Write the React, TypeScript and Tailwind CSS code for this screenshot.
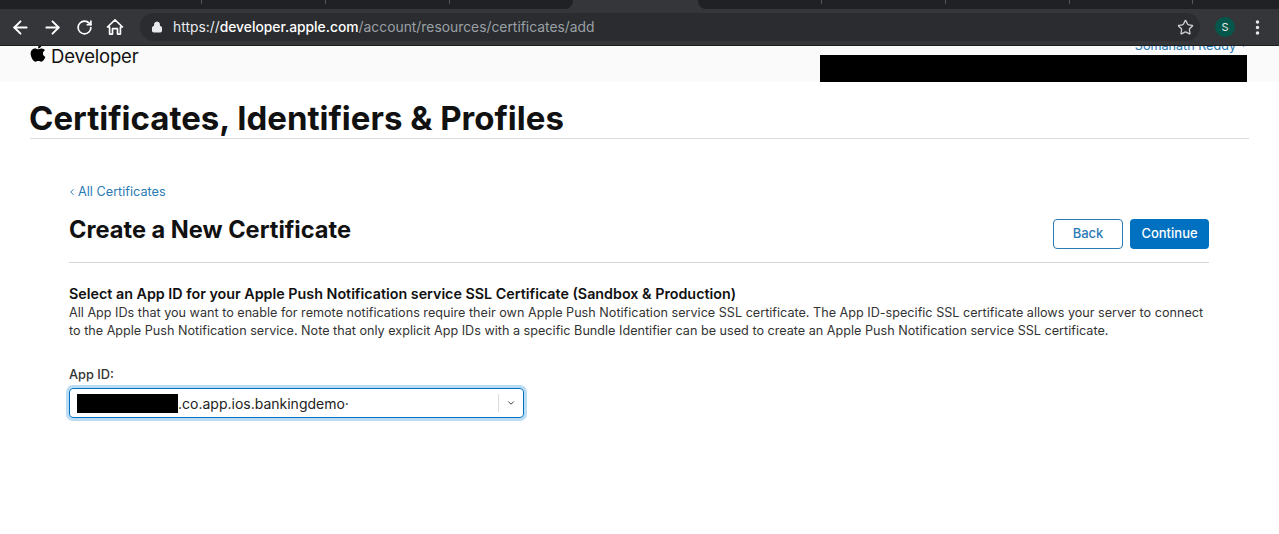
import { ArrowLeft, ArrowRight, ChevronDown, ChevronLeft, Lock, MoreVertical, RotateCw, Star } from "lucide-react";

function AppleLogo() {
  return (
    <svg viewBox="0 0 384 512" className="w-[16px] h-[20px] fill-black">
      <path d="M318.7 268.7c-.2-36.7 16.4-64.4 50-84.8-18.8-26.9-47.2-41.7-84.7-44.6-35.5-2.8-74.3 20.7-88.5 20.7-15 0-49.4-19.7-76.4-19.7C63.3 141.2 4 184.8 4 273.5q0 39.3 14.4 81.2c12.8 36.7 59 126.7 107.2 125.2 25.2-.6 43-17.9 75.8-17.9 31.8 0 48.3 17.9 76.4 17.9 48.6-.7 90.4-82.5 102.6-119.3-65.2-30.7-61.7-90-61.7-91.9zm-56.6-164.2c27.3-32.4 24.8-61.9 24-72.5-24.1 1.4-52 16.4-67.9 34.9-17.5 19.8-27.8 44.3-25.6 71.9 26.1 2 49.9-11.4 69.5-34.3z" />
    </svg>
  );
}

function HomeIcon() {
  return (
    <svg viewBox="0 0 24 24" className="w-[20px] h-[20px] fill-none stroke-white stroke-2 ml-[1px]">
      <path d="M9 20.5v-6.5h6v6.5h3.5v-8.5h2.5L12 3.5 3 12h2.5v8.5z" strokeLinejoin="round" />
    </svg>
  );
}

function BrowserBar() {
  return (
    <div className="h-[46px] flex flex-col bg-[#35363a] border-b border-[#1d1e20] overflow-hidden">
      <div className="h-[9px] flex bg-[#35363a]">
        <div className="w-[573px] bg-[#202124] rounded-br-lg flex">
          <div className="w-[202px] border-r border-[#55575a] h-[4px]" />
          <div className="w-[124px] border-r border-[#55575a] h-[4px]" />
          <div className="w-[124px] border-r border-[#55575a] h-[4px]" />
        </div>
        <div className="w-[125px]" />
        <div className="flex-1 bg-[#202124] rounded-bl-lg flex">
          <div className="w-[124px] border-r border-[#55575a] h-[4px]" />
          <div className="w-[124px] border-r border-[#55575a] h-[4px]" />
          <div className="w-[124px] border-r border-[#55575a] h-[4px]" />
          <div className="w-[123px] border-r border-[#55575a] h-[4px]" />
        </div>
      </div>
      <div className="flex-1 flex items-center text-white">
        <div className="w-[140px] flex items-center pl-[10px] gap-[11px]">
          <ArrowLeft size={21} strokeWidth={2.2} />
          <ArrowRight size={21} strokeWidth={2.2} />
          <RotateCw size={17} strokeWidth={2.4} className="ml-[2px]" />
          <HomeIcon />
        </div>
        <div className="w-[1060px] h-[28px] rounded-full bg-[#2a2c2f] flex items-center pl-[11px] pr-[6px] font-['Inter',sans-serif] text-[13.85px]">
          <Lock size={12} fill="#e8eaed" strokeWidth={2} className="text-[#e8eaed]" />
          <span className="ml-[10px] text-[#e8eaed]">https://</span>
          <span className="text-white font-medium">developer.apple.com</span>
          <span className="text-[#9aa0a6]">/account/resources/certificates/add</span>
          <Star size={17} strokeWidth={1.8} className="ml-auto text-[#d0d2d5]" />
        </div>
        <div className="ml-[15px] w-[20px] h-[20px] rounded-full bg-[#04574a] text-[#e8eaed] flex items-center justify-center font-['Inter',sans-serif] text-[11px]">
          S
        </div>
        <MoreVertical size={19} strokeWidth={2.4} className="ml-[13px] text-[#e8eaed]" />
      </div>
    </div>
  );
}

function DevHeader() {
  return (
    <div className="h-[36px] bg-[#fafafa] flex overflow-hidden pl-[30px] pr-[32px]">
      <div className="flex items-start gap-[5px] -mt-[3px]">
        <AppleLogo />
        <span className="font-['Inter',sans-serif] text-[18.5px] leading-[24px] mt-[1px] text-[#111] tracking-[-0.2px]">Developer</span>
      </div>
      <div className="ml-auto w-[427px] flex flex-col">
        <div className="h-[9px] relative">
          <div className="absolute -right-[1px] -top-[8px] flex items-center gap-[3px] text-[12.6px] leading-[15px] text-[#2a7ab5] font-['Inter',sans-serif] whitespace-nowrap">
            Somanath Reddy
            <ChevronDown size={9} />
          </div>
        </div>
        <div className="flex-1 bg-black" />
      </div>
    </div>
  );
}

function App() {
  return (
    <div className="w-[1279px] h-[534px] overflow-hidden bg-white font-['Inter',sans-serif] text-[#111]">
      <BrowserBar />
      <DevHeader />

      <div className="mx-[30px] h-[57px] border-b border-[#dcdcdc] pt-[17px]">
        <h1 className="text-[33px] leading-[38px] font-bold -ml-[1px]">Certificates, Identifiers &amp; Profiles</h1>
      </div>

      <div className="ml-[69px] w-[1140px] pt-[45px]">
        <a className="flex items-center text-[12.7px] leading-[16px] text-[#2a7ab5]">
          <ChevronLeft size={10} strokeWidth={2.4} className="mr-[1px] -ml-[2px]" />
          All Certificates
        </a>

        <div className="flex justify-between h-[57px] border-b border-[#d6d6d6] mt-[6px]">
          <h2 className="text-[23.6px] leading-[30px] font-bold mt-[9px]">Create a New Certificate</h2>
          <div className="flex gap-[7px] mt-[13px] h-[30px] text-[13px]">
            <button className="w-[70px] rounded border border-[#2a7ab5] text-[#2a7ab5] font-medium">Back</button>
            <button className="w-[79px] rounded bg-[#0070c0] text-white font-medium">Continue</button>
          </div>
        </div>

        <h3 className="text-[14.3px] leading-[18px] font-semibold mt-[22px]">
          Select an App ID for your Apple Push Notification service SSL Certificate (Sandbox &amp; Production)
        </h3>
        <p className="text-[12.63px] leading-[18px] text-[#333] mt-[1px] whitespace-nowrap">
          All App IDs that you want to enable for remote notifications require their own Apple Push Notification service SSL certificate. The App ID-specific SSL certificate allows your server to connect
          <br />
          to the Apple Push Notification service. Note that only explicit App IDs with a specific Bundle Identifier can be used to create an Apple Push Notification service SSL certificate.
        </p>

        <label className="block text-[12.8px] leading-[16px] font-medium text-[#333] mt-[27px]">App ID:</label>
        <div className="mt-[5px] w-[455px] h-[30px] rounded border border-[#0070c0] ring-[3px] ring-[#bcdcf3] flex items-center pl-[7px] text-[14px]">
          <div className="w-[101px] h-[19px] bg-black" />
          <span className="text-[#222]">.co.app.ios.bankingdemo·</span>
          <div className="ml-auto mr-[1px] w-[24px] h-[18px] border-l border-[#dcdcdc] flex items-center justify-center text-[#444]">
            <ChevronDown size={10} strokeWidth={2.4} />
          </div>
        </div>
      </div>
    </div>
  );
}

export default App;
